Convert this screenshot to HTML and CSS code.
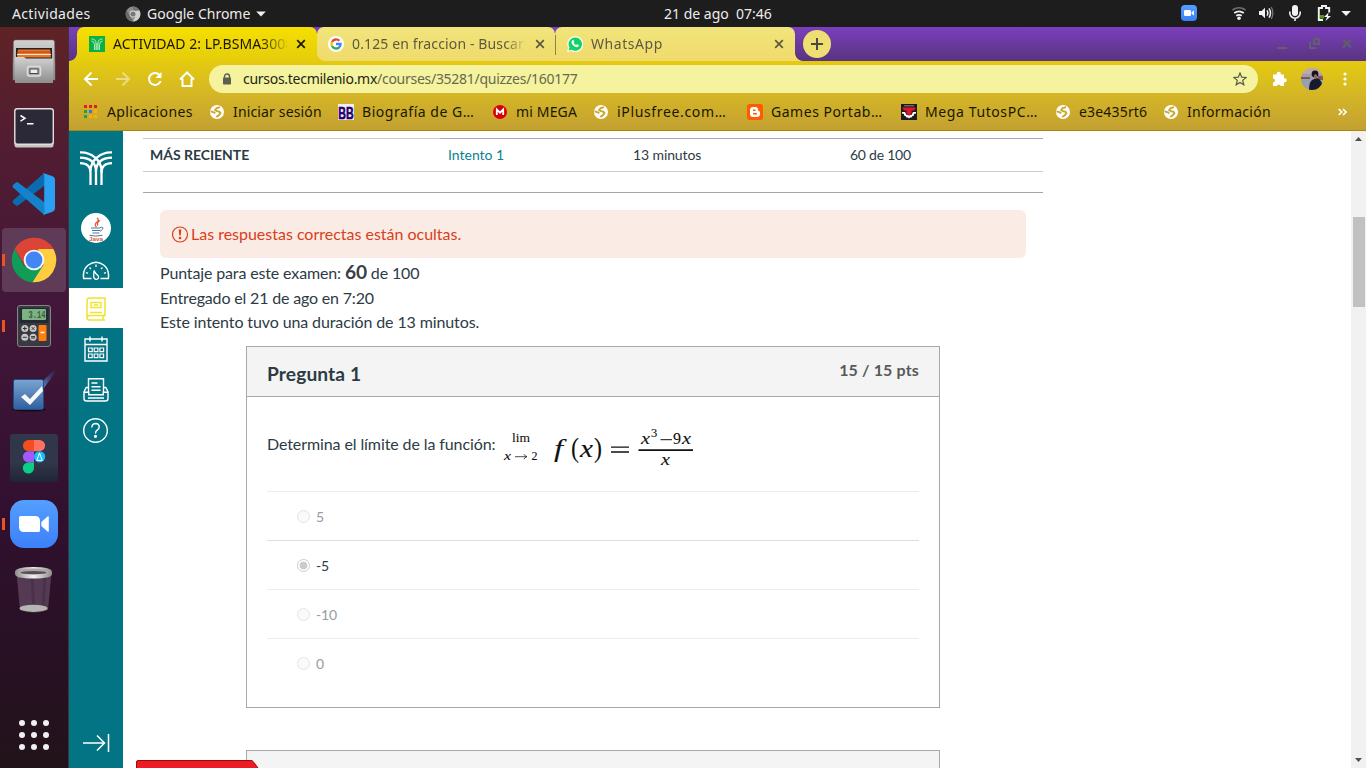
FILE: index.html
```html
<!DOCTYPE html>
<html lang="es">
<head>
<meta charset="utf-8">
<title>ACTIVIDAD 2</title>
<link rel="stylesheet" href="styles.css">
</head>
<body>
<svg width="0" height="0" class="defs">
  <defs>
    <symbol id="globe" viewBox="0 0 16 16"><circle cx="8" cy="8" r="7" fill="#fff"/><path d="M11 3.200 7.800 4 6.200 6 8 7.200l2.600.6.800 1.400-1.600 2-2.600 1.800M1.600 7.400l2.600.8 2.200.8" fill="none" stroke="#c9a72c" stroke-width="1.900"/></symbol>
    <symbol id="close" viewBox="0 0 10 10"><path d="M1.200 1.200l7.600 7.600M8.800 1.200 1.200 8.800" stroke="currentColor" stroke-width="1.700"/></symbol>
    <linearGradient id="gSteel" x1="0" y1="0" x2="0" y2="1"><stop offset="0" stop-color="#d2d2d2"/><stop offset="1" stop-color="#8d8d8d"/></linearGradient>
    <linearGradient id="gZoom" x1="0" y1="0" x2="0" y2="1"><stop offset="0" stop-color="#549fff"/><stop offset="1" stop-color="#3d80fb"/></linearGradient>
    <linearGradient id="gCheck" x1="0" y1="0" x2="0" y2="1"><stop offset="0" stop-color="#7aa5d3"/><stop offset="1" stop-color="#2f5f9f"/></linearGradient>
    <linearGradient id="gFig" x1="0" y1="0" x2="0" y2="1"><stop offset="0" stop-color="#30374a"/><stop offset=".6" stop-color="#31374a"/><stop offset="1" stop-color="#1f2536"/></linearGradient>
    <linearGradient id="gRay" x1="0" y1="1" x2="1" y2="0"><stop offset="0" stop-color="#5c8fcf"/><stop offset="1" stop-color="#2c3c70" stop-opacity=".2"/></linearGradient>
    <linearGradient id="gRim" x1="0" x2="1"><stop offset="0" stop-color="#8c8c88"/><stop offset=".5" stop-color="#f1f1ee"/><stop offset="1" stop-color="#8c8c88"/></linearGradient>
  </defs>
</svg>

<header class="topbar">
  <span class="ui activities">Actividades</span>
  <svg class="app-ico" width="16" height="16" viewBox="0 0 16 16"><circle cx="8" cy="8" r="7.400" fill="#8d8d8d"/><path d="M8 .6A7.400 7.400 0 0 1 14.600 4.500H8z" fill="#777"/><path d="M14.600 4.600A7.400 7.400 0 0 1 8 15.400L11 9.500 10.500 5z" fill="#cfcfcf"/><path d="M1.600 4.300 5 9.800l3 5.600A7.400 7.400 0 0 1 1.600 4.300z" fill="#6b6b6b"/><circle cx="8" cy="8" r="3.400" fill="#ddd"/><circle cx="8" cy="8" r="2.600" fill="#777"/></svg>
  <span class="ui appname">Google Chrome</span>
  <svg class="caret" width="10" height="6" viewBox="0 0 10 6"><path d="M.2.5h9.600L5 5.400z" fill="#f2f2f2"/></svg>
  <span class="ui clock">21 de ago&nbsp; 07:46</span>
  <svg class="tray" width="175" height="27" viewBox="0 0 175 27">
    <rect x="0" y="5" width="16" height="16" rx="4" fill="url(#gZoom)"/><rect x="3" y="10" width="7" height="6" rx="1.200" fill="#fff"/><path d="M10.600 12.200 13 10.400v5.200l-2.400-1.800z" fill="#fff"/>
    <g fill="none" stroke="#f2f2f2" stroke-width="1.700"><path d="M51.500 10q6.500-4.500 13 0" stroke="#6f6f6f"/><path d="M53.200 13q4.800-3.400 9.600 0M55.300 15.800q2.700-1.900 5.400 0"/></g><circle cx="58" cy="18.200" r="1.800" fill="#f2f2f2"/>
    <path d="M78 11h2.600L84 7.800v10.500L80.600 15H78z" fill="#f2f2f2"/><path d="M86 10.300q1.700 2.700 0 5.400M88 8.300q3 4.600 0 9.400" fill="none" stroke="#f2f2f2" stroke-width="1.500"/><path d="M90.300 7q3.200 6 0 12" fill="none" stroke="#777" stroke-width="1.300"/>
    <rect x="111" y="5" width="6" height="11" rx="3" fill="#f2f2f2"/><path d="M108.800 11.500v1.500a5.200 5.200 0 0 0 10.400 0v-1.500M114 18v3" fill="none" stroke="#f2f2f2" stroke-width="1.600"/>
    <path d="M142 20h-4.200V8H141V6h4v2h3.200v4.500" fill="none" stroke="#f2f2f2" stroke-width="1.900"/><rect x="139" y="15" width="4" height="3.500" fill="#4c9a06"/><path d="M147.500 12.500 143 17h3l-1.500 4 5.500-5h-3z" fill="#f2f2f2"/>
    <path d="M160.300 11h9.600l-4.800 5z" fill="#f2f2f2"/>
  </svg>
</header>

<div class="desktop">
  <nav class="dock">
    <div class="slot"><svg width="64" height="64" viewBox="0 0 64 64"><path d="M11.500 12q0-2 2-2h37q2 0 2 2l.5 24v14H11V36z" fill="url(#gSteel)" stroke="#777" stroke-width=".5"/><rect x="14" y="18" width="36" height="12" fill="#25211f"/><path d="M16 19.500h32l1 8H15z" fill="#e8752b"/><path d="M15 24.500h34" stroke="#fbe9d8" stroke-width="1.200"/><path d="M15 22h34" stroke="#b34012"/><path d="M13 27h9l2 1.500h27v24.500H13z" fill="url(#gSteel)"/><rect x="25.500" y="36.500" width="13" height="9.500" rx="2" fill="#aaa" stroke="#dedede" stroke-width="1.500"/><rect x="28" y="39" width="8" height="4.500" fill="#eee" stroke="#444"/></svg></div>
    <div class="slot"><svg width="64" height="64" viewBox="0 0 64 64"><rect x="12.500" y="14" width="39" height="37.500" rx="2.500" fill="#c9c5c0"/><rect x="12.800" y="12.700" width="38.500" height="35.500" rx="2.500" fill="#2b2838" stroke="#e1dfdc" stroke-width="1.400"/><path d="m18.500 19.500 4.500 2.800-4.500 2.800M25 27.800h6.500" fill="none" stroke="#fff" stroke-width="1.500"/></svg></div>
    <div class="slot"><svg width="64" height="64" viewBox="0 0 64 64"><path d="M11 38.500 42 11.200l1 12L16 43.500q-1 .7-2 0L11 41q-1-1.200 0-2.500z" fill="#0a6cb0"/><path d="M11 25.500 42 52.800l1-12L16 20.500q-1-.7-2 0L11 23q-1 1.200 0 2.500z" fill="#1583cc"/><path d="M41 11 50 14q3 1.200 3 4v28q0 2.800-3 4l-9 3q1.200-.8 1.200-3V14q0-2.200-1.200-3z" fill="#29a0f2"/></svg></div>
    <div class="slot current run"><svg width="64" height="64" viewBox="0 0 64 64"><path d="M32 32 12.800 20.800A22.300 22.300 0 0 1 51.400 21L44 22z" fill="#db4437"/><path d="M12.800 20.800A22.300 22.300 0 0 0 30.500 54.300L42 38H22z" fill="#0f9d58"/><path d="M51.400 21A22.300 22.300 0 0 1 30.500 54.300L41.500 37 36 21z" fill="#ffcd40"/><path d="M12.800 20.800 23 38l9-17h19.400A22.300 22.300 0 0 0 12.800 20.800z" fill="#db4437"/><circle cx="32" cy="32" r="10.300" fill="#f5f5f5"/><circle cx="32" cy="32" r="8.400" fill="#4285f4"/></svg></div>
    <div class="slot run"><svg width="64" height="64" viewBox="0 0 64 64"><rect x="15.500" y="11.500" width="33" height="41" rx="2.500" fill="#393942" stroke="#858585"/><rect x="17.500" y="14" width="29" height="15" fill="#232a31"/><rect x="20" y="15" width="24" height="11" rx="1" fill="#7db383"/><text x="26.500" y="24" font-size="10" class="lcd" textLength="17" lengthAdjust="spacingAndGlyphs">3.14</text><g fill="#c8c8c8"><circle cx="22.800" cy="34.500" r="3.500"/><circle cx="31.100" cy="34.500" r="3.500"/><circle cx="22.800" cy="43.300" r="3.500"/><circle cx="31.100" cy="43.300" r="3.500"/></g><path d="M20.800 34.500h4M22.800 32.500v4M29.800 33.200l2.600 2.600M32.400 33.200l-2.600 2.600M20.800 43.300h4M29.100 42.600h4M29.100 44h4" stroke="#333"/><rect x="36.500" y="31" width="8" height="16" rx="1" fill="#ff7f0e"/><path d="M38.500 38.500h4" stroke="#fff" stroke-width="1.500"/></svg></div>
    <div class="slot"><svg width="64" height="64" viewBox="0 0 64 64"><path d="M42 28 40 22 53 9v4z" fill="url(#gRay)"/><ellipse cx="27" cy="49.500" rx="17" ry="2" fill="#160b18"/><rect x="11.500" y="19.500" width="30" height="30" rx="2" fill="url(#gCheck)" stroke="#234b86"/><path d="m19 37 4-3 5 5 12-13 1 5-13 14z" fill="#f7f7f4"/></svg></div>
    <div class="slot"><svg width="64" height="64" viewBox="0 0 64 64"><rect x="8" y="8" width="48" height="48" rx="3" fill="url(#gFig)"/><path d="M32 14h-5.500a5.600 5.600 0 0 0 0 11.200H32z" fill="#f24e1e"/><path d="M32 14h5.500a5.600 5.600 0 0 1 0 11.200H32z" fill="#ff7262"/><path d="M32 25.200h-5.500a5.600 5.600 0 0 0 0 11.200H32z" fill="#a259ff"/><circle cx="37.600" cy="30.800" r="5.600" fill="#1abcfe"/><path d="M32 36.400h-5.500A5.600 5.600 0 1 0 32 42z" fill="#0acf83"/><path d="m37.500 27 1.200 3.400 1.600 4h-5.600l1.600-4z" fill="none" stroke="#fff"/></svg></div>
    <div class="slot run"><svg width="64" height="64" viewBox="0 0 64 64"><rect x="8" y="8" width="48" height="48" rx="14" fill="url(#gZoom)"/><path d="M17 25.500q0-1.500 1.500-1.500H33q5 0 5 5v9.500q0 1.500-1.500 1.500H22q-5 0-5-5zM39.300 30l6-5.300q1.500-1.200 1.500.3v14q0 1.500-1.500.3l-6-5.300z" fill="#fff"/></svg></div>
    <div class="slot"><svg width="64" height="64" viewBox="0 0 64 64"><path d="m14.500 15 3.500 37q14 5 28 0l3.500-37z" fill="#6a5268" opacity=".65"/><path d="m30 18 2 35M43 18l-2 34" stroke="#3b2640" stroke-width="3" opacity=".4"/><ellipse cx="31.500" cy="50.300" rx="14" ry="3.600" fill="#b5b5b1"/><path d="M13 14q0-5 18.500-5T50 14v2q0 4.500-18.500 4.500T13 16z" fill="url(#gRim)"/><ellipse cx="31.500" cy="13.500" rx="15.500" ry="3" fill="#aaa8a4"/><ellipse cx="31.500" cy="14.600" rx="13" ry="1.700" fill="#5c4b5c"/></svg></div>
    <svg class="grid" width="32" height="32" viewBox="0 0 32 32" fill="#f0f0f0"><circle cx="4" cy="4" r="3"/><circle cx="16" cy="4" r="3"/><circle cx="28" cy="4" r="3"/><circle cx="4" cy="16" r="3"/><circle cx="16" cy="16" r="3"/><circle cx="28" cy="16" r="3"/><circle cx="4" cy="28" r="3"/><circle cx="16" cy="28" r="3"/><circle cx="28" cy="28" r="3"/></svg>
  </nav>

  <div class="browser">
    <div class="chrome">
      <div class="tabs">
        <div class="edge"></div>
        <div class="tab active">
          <svg width="16" height="16" viewBox="0 0 16 16"><path fill="#08b243" d="M0 0h16v16H0z"/><path d="M2.500 3q4.500 0 4.500 4v7M2.500 5q3 0 3 4v5M13.500 3Q9 3 9 7v7M13.500 5q-3 0-3 4v5M8 7v7" fill="none" stroke="#d9f5e0" stroke-width=".8"/></svg>
          <span class="ui title t1">ACTIVIDAD 2: LP.BSMA3008</span><svg class="x" width="10" height="10"><use href="#close"/></svg>
        </div>
        <div class="tab other second">
          <svg width="16" height="16" viewBox="0 0 16 16"><circle cx="8" cy="8" r="8" fill="#fff"/><g fill="none" stroke-width="2.300"><path d="M4 6A4.600 4.600 0 0 1 11.400 4.800" stroke="#ea4335"/><path d="M4 6a4.600 4.600 0 0 0 0 4" stroke="#fbbc05"/><path d="M4 10a4.600 4.600 0 0 0 7 1.500" stroke="#34a853"/><path d="M11 11.600A4.600 4.600 0 0 0 12.600 8H8" stroke="#4285f4"/></g></svg>
          <span class="ui title t2">0.125 en fraccion - Buscar con</span><svg class="x" width="10" height="10"><use href="#close"/></svg>
        </div>
        <div class="tab other third">
          <svg width="16" height="16" viewBox="0 0 16 16"><path d="M0 16 1.200 11.800A8 8 0 1 1 4.200 15z" fill="#fff"/><path d="M1.500 14.500 2.500 11.500A6.700 6.700 0 1 1 4.600 13.700z" fill="#12d366"/><path d="M5.300 4.300q1-.8 1.500.2l.5 1.300-.7 1q.8 1.700 2.500 2.300l.9-.9 1.700.8q.5 1.700-1.700 2.200-2.500 0-4.400-2.500-2-2.600-.3-4.400z" fill="#fff"/></svg>
          <span class="ui title t3">WhatsApp</span><svg class="x" width="10" height="10"><use href="#close"/></svg>
        </div>
        <div class="edge right"></div>
        <div class="plus"><svg width="12" height="12" viewBox="0 0 12 12"><path d="M6 0v12M0 6h12" stroke="#474a42" stroke-width="2"/></svg></div>
        <svg class="winbtns" width="76" height="12" viewBox="0 0 76 12" fill="none" stroke="#606167" stroke-width="2"><path d="M0 10h10M37 1h5v5h-5zM33 4v6h6M66 1.500l8 8M74 1.500l-8 8"/></svg>
      </div>
      <div class="toolbar">
        <svg class="navico" width="112" height="18" viewBox="0 0 112 18" fill="none" stroke="#fff" stroke-width="2"><path d="M15 9H2M8.500 2.500 2 9l6.500 6.500"/><path d="M33 9h13M39.500 2.500 46 9l-6.500 6.500" opacity=".45"/><path d="M77 5.500A6 6 0 1 0 77.700 11"/><path d="M78.500 2v6h-6z" fill="#fff" stroke="none"/><path d="M97 9.500 104 2.500l7 7M99.500 8.500v7.500h9V8.500"/></svg>
        <div class="omnibox">
          <svg width="10" height="12" viewBox="0 0 10 12"><path d="M2.500 5V3.500a2.500 2.500 0 0 1 5 0V5" fill="none" stroke="#5d6050" stroke-width="1.400"/><rect x="1" y="4.500" width="8" height="7" rx=".7" fill="#5d6050"/></svg>
          <span class="ui url"><b>cursos.tecmilenio.mx</b>/courses/35281/quizzes/160177</span>
          <svg class="star" width="14" height="14" viewBox="0 0 14 14"><path d="M7 1 8.700 5.200l4.500.3-3.500 2.900 1.100 4.400L7 10.400l-3.800 2.400 1.100-4.400L.8 5.500l4.500-.3z" fill="none" stroke="#55584a" stroke-width="1.200"/></svg>
        </div>
        <svg class="ext" width="16" height="16" viewBox="0 0 16 16"><path d="M1 3.500h3.800a2.100 2.100 0 1 1 4 0H12v3.800a2.100 2.100 0 1 1 0 4V15H8.700a2 2 0 0 0-3.900 0H1v-3.600a2 2 0 0 0 0-4z" fill="#fff"/></svg>
        <svg class="me" width="22" height="22" viewBox="0 0 22 22"><clipPath id="mc"><circle cx="11" cy="11" r="11"/></clipPath><g clip-path="url(#mc)"><path fill="#98a0ad" d="M0 0h22v22H0z"/><path fill="#bfaaa8" d="M0 0h22v6H0z"/><path fill="#8d5350" d="M0 9h9v2H0zM17 8h5v4h-5z"/><path d="M8 22q0-9 4-10.500L16 10q5 1 6 12z" fill="#151a2e"/><circle cx="14" cy="6" r="3.400" fill="#16131a"/><ellipse cx="14.500" cy="8.500" rx="1.700" ry="2.200" fill="#9a6552"/></g></svg>
        <svg class="dots" width="4" height="14" viewBox="0 0 4 14" fill="#fff"><circle cx="2" cy="2" r="1.600"/><circle cx="2" cy="7" r="1.600"/><circle cx="2" cy="12" r="1.600"/></svg>
      </div>
      <div class="bookmarks">
        <a class="bm b1"><svg width="16" height="16" viewBox="0 0 16 16"><path fill="#e41f1a" d="M1 1h3v3H1zM6 1h3v3H6zM11 1h3v3h-3z"/><path fill="#16a35a" d="M1 6h3v3H1zM1 11h3v3H1z"/><path fill="#3c6cf0" d="M6 6h3v3H6z"/><path fill="#f6b500" d="M11 6h3v3h-3zM6 11h3v3H6zM11 11h3v3h-3z"/></svg><span class="ui">Aplicaciones</span></a>
        <a class="bm b2"><svg width="16" height="16"><use href="#globe"/></svg><span class="ui">Iniciar sesión</span></a>
        <a class="bm b3"><svg width="16" height="16" viewBox="0 0 16 16"><path fill="#f0eef5" d="M0 0h16v16H0z"/><text x=".3" y="14.600" class="bb" textLength="15.400" lengthAdjust="spacingAndGlyphs">BB</text></svg><span class="ui">Biografía de G…</span></a>
        <a class="bm b4"><svg width="16" height="16" viewBox="0 0 16 16"><circle cx="8" cy="8" r="7" fill="#d90007"/><path d="M4.800 11V5.500L8 8.700l3.200-3.200V11" fill="none" stroke="#fff" stroke-width="1.800"/></svg><span class="ui">mi MEGA</span></a>
        <a class="bm b5"><svg width="16" height="16"><use href="#globe"/></svg><span class="ui">iPlusfree.com…</span></a>
        <a class="bm b6"><svg width="16" height="16" viewBox="0 0 16 16"><rect width="16" height="16" rx="2.500" fill="#ff5b00"/><path d="M6 3h2.500q2.500 0 2.500 2.500 0 1.300 1 1.500 1 .2 1 1.500v1.500q0 3-3 3H6q-3 0-3-3V6q0-3 3-3z" fill="#fff"/><path d="M6 6.300h2.500M6 9.800h4" stroke="#ff5b00" stroke-width="1.500"/></svg><span class="ui">Games Portab…</span></a>
        <a class="bm b7"><svg width="16" height="16" viewBox="0 0 16 16"><path fill="#1c1c1c" d="M0 0h16v16H0z"/><path d="M3 1.800h10" stroke="#aaa" stroke-width=".8"/><path d="M1 8h3l1.500 3h5L12 8h3v1.500l-2 .5v1.500l-1.500.5-1 1.500H9L8 14.500 7 13.500H5.500l-1-1.500-1.500-.5V10l-2-.5z" fill="#fff"/><path d="M1 3.500h14L13 6.500h-2.500V9.500L8 12 5.500 9.500V6.500H3z" fill="#e6142a"/></svg><span class="ui">Mega TutosPC…</span></a>
        <a class="bm b8"><svg width="16" height="16"><use href="#globe"/></svg><span class="ui">e3e435rt6</span></a>
        <a class="bm b9"><svg width="16" height="16"><use href="#globe"/></svg><span class="ui">Información</span></a>
        <svg class="more" width="9" height="8" viewBox="0 0 9 8"><path d="m.7 1 3 3-3 3M5 1l3 3-3 3" fill="none" stroke="#fff" stroke-width="1.700"/></svg>
      </div>
    </div>

    <div class="page">
      <nav class="side">
        <div class="n logo"><svg width="34" height="36" viewBox="0 0 34 36" fill="none" stroke="#fff" stroke-width="2.300"><path d="M1 2.300Q10 2 16 7.500 22.500 13 22.500 21v14M1 7.700Q17 8 17 22v13M1 13.200q10.500 0 10.500 9.500V35"/><path d="M33 2.300Q24 2 18 7.500 11.500 13 11.500 21M33 7.700Q17 8 17 22M33 13.200q-10.500 0-10.500 9.500"/></svg></div>
        <div class="n ava"><svg width="30" height="30" viewBox="0 0 30 30"><circle cx="15" cy="15" r="15" fill="#fff"/><path d="M16 5q3 2-.5 4.500-2.500 2 0 4.500M19 7.500q-4 2.500-2 5" fill="none" stroke="#e2573a" stroke-width="1.300"/><path d="M10 15h9M11 17.500h8M11.500 20h7M8.500 22.300q6 1.500 13 0M19 14.500q4-1 2.500 1.800L19 18.500" fill="none" stroke="#4d779a"/><text x="8" y="28" class="java" textLength="14" lengthAdjust="spacingAndGlyphs">Java</text></svg></div>
        <div class="n dash"><svg width="28" height="20" viewBox="0 0 28 20" fill="none" stroke="#fff" stroke-width="1.500"><path d="M9.500 17.500H1.700q-1.500-8.500 4.600-13.500 7.700-5.500 15.400 0Q27.800 9 26.300 17.500H18.500"/><path d="M12 9.500q1.500 3.500 4.300 5.500 1 3-2 3.300-2.700-.2-2.600-3.300zM4 11.500l2 .8M7.500 6.500 9 8M14 3.500V6M20.500 6.500 19 8M24 11.500l-2 .8" stroke-width="1.300"/></svg></div>
        <div class="n on"><svg width="20" height="24" viewBox="0 0 20 24" fill="none" stroke="#efe32c" stroke-width="1.500"><path d="M17.500 18.500H3.500q-2.500 0-2.500 2.300T3.500 23H19M1 20.500V4q0-3 3-3h15v17.500h-2V23"/><path d="M5 5.500h10v5H5zM7.500 8h5M4 15.500h12" stroke-width="1.400"/></svg></div>
        <div class="n"><svg width="24" height="26" viewBox="0 0 24 26" fill="none" stroke="#fff" stroke-width="1.400"><path d="M1 3h22v22H1zM1 8.500h22M6 .5v5M18 .5v5"/><path d="M4.500 12h3.700v3.700H4.500zM10.200 12h3.700v3.700h-3.700zM15.900 12h3.700v3.700h-3.700zM4.500 18h3.700v3.700H4.500zM10.200 18h3.700v3.700h-3.700zM15.900 18h3.700v3.700h-3.700z" stroke-width="1.200"/></svg></div>
        <div class="n"><svg width="26" height="24" viewBox="0 0 26 24" fill="none" stroke="#fff" stroke-width="1.400"><path d="M5.500 14.500V.8h15v13.700M5.500 9.500H3.200L1 14v6.500Q1 23 3.500 23h19q2.500 0 2.500-2.500V14l-2.200-4.500h-2.300M1.200 14.200h4.500v2.500h14.600v-2.500h4.500M8.500 5h6M8.500 8.700h9M8.500 12.200h9M5 20h16"/></svg></div>
        <div class="n help"><svg width="26" height="26" viewBox="0 0 26 26" fill="none" stroke="#fff" stroke-width="1.400"><circle cx="12.500" cy="12.500" r="11.800"/><path d="M8.800 9.500q.2-4 3.900-4 3.500.2 3.500 3.500 0 1.800-2 3.200-1.700 1-1.700 3.300"/><circle cx="12.500" cy="18.300" r=".9" fill="#fff"/></svg></div>
        <svg class="expand" width="27" height="18" viewBox="0 0 27 18" fill="none" stroke="#fff" stroke-width="1.500"><path d="M0 9h21.500M14 1.500 21.500 9 14 16.500M25.500 0v18"/></svg>
      </nav>
      <main>
        <div class="thead"><span>Puntaje</span></div>
        <div class="row"><strong>MÁS RECIENTE</strong><a>Intento 1</a><span>13 minutos</span><span>60 de 100</span></div>
        <div class="rule"></div>
        <section class="quiz">
          <div class="alert"><svg width="17" height="17" viewBox="0 0 17 17"><circle cx="8" cy="8.500" r="7.500" fill="none" stroke="#d8401a" stroke-width="1.200"/><path d="M6.700 3.600h2.600l-.6 6H7.300z" fill="#d8401a"/><circle cx="8" cy="12" r="1.300" fill="#d8401a"/></svg><span>Las respuestas correctas están ocultas.</span></div>
          <p class="score">Puntaje para este examen: <b>60</b> de 100</p>
          <p class="sent">Entregado el 21 de ago en 7:20</p>
          <p>Este intento tuvo una duración de 13 minutos.</p>
        </section>
        <article class="question">
          <header><h2>Pregunta 1</h2><span class="pts">15 / 15 pts</span></header>
          <div class="qtext"><span>Determina el límite de la función:</span>
            <svg class="math" width="200" height="50" viewBox="500 420 200 50">
              <text x="512" y="442" font-size="13" textLength="18" lengthAdjust="spacingAndGlyphs">lim</text>
              <text x="504" y="460" font-size="13" class="i" textLength="7" lengthAdjust="spacingAndGlyphs">x</text>
              <path d="M515 456.700h11.500M524 454.200q.8 2 3 2.500-2.200.5-3 2.500" fill="none" stroke="#222" stroke-width=".8"/>
              <text x="531.500" y="460" font-size="12">2</text>
              <text x="554" y="457" font-size="25" class="i" textLength="9" lengthAdjust="spacingAndGlyphs">f</text>
              <text x="571" y="457" font-size="27" textLength="8" lengthAdjust="spacingAndGlyphs">(</text>
              <text x="580" y="457" font-size="25" class="i" textLength="13" lengthAdjust="spacingAndGlyphs">x</text>
              <text x="594" y="457" font-size="27" textLength="8" lengthAdjust="spacingAndGlyphs">)</text>
              <path d="M611 447.200h18M611 452h18" stroke="#111" stroke-width="1.300"/>
              <text x="641" y="444" font-size="17" class="i" textLength="9" lengthAdjust="spacingAndGlyphs">x</text>
              <text x="651" y="437" font-size="12.500">3</text>
              <path d="M660.500 439.700h11.500" stroke="#111"/>
              <text x="673" y="444" font-size="16">9</text>
              <text x="682" y="444" font-size="17" class="i" textLength="9" lengthAdjust="spacingAndGlyphs">x</text>
              <path d="M638.500 450.200h54.500" stroke="#111" stroke-width="1.800"/>
              <text x="661" y="465" font-size="17" class="i" textLength="9" lengthAdjust="spacingAndGlyphs">x</text>
            </svg>
          </div>
          <div class="ans"><i class="radio"></i><span>5</span></div>
          <div class="ans sel"><i class="radio"></i><span>-5</span></div>
          <div class="ans"><i class="radio"></i><span>-10</span></div>
          <div class="ans"><i class="radio"></i><span>0</span></div>
        </article>
        <article class="question next"><header><h2>Pregunta 2</h2><span class="pts">15 / 15 pts</span></header></article>
        <svg class="redtab" width="124" height="8" viewBox="0 0 124 8"><path d="M.5 8V2Q.5.500 2 .5H115q1.500 0 2.300 1.200L122 8" fill="#ec1b24" stroke="#9d090d"/></svg>
      </main>
      <div class="scroll">
        <svg width="15" height="17" viewBox="0 0 15 17"><path d="M4 10h7L7.500 6z" fill="#505050"/></svg>
        <div class="thumb"></div>
        <svg class="down" width="15" height="17" viewBox="0 0 15 17"><path d="M4 7h7l-3.500 4z" fill="#505050"/></svg>
      </div>
    </div>
  </div>
</div>
</body>
</html>
```
FILE: styles.css
```css
* { box-sizing: border-box; }
body { margin: 0; width: 1366px; height: 768px; overflow: hidden; font-family: Lato, sans-serif; background: #fff; }
svg { display: block; flex: none; }
.defs { position: absolute; }
.ui { font-family: "Noto Sans", "Open Sans", sans-serif; font-size: 14px; white-space: nowrap; }

.topbar { height: 27px; background: #1d1d1d; color: #ececec; display: flex; align-items: center; }
.topbar .ui { padding-bottom: 1px; }
.activities { padding-left: 12px; width: 125px; letter-spacing: .35px; }
.app-ico { width: 16px; }
.appname { padding-left: 6px; width: 115px; }
.caret { margin-left: 0; }
.clock { margin-left: 398px; width: 110px; }
.tray { margin-left: auto; margin-right: 10px; }

.desktop { display: flex; height: 741px; }
.dock { width: 69px; border-right: 1px solid #3f3339; padding: 3px 0 0 2px; display: flex; flex-direction: column; gap: 2px; background: linear-gradient(#5e2325, #521d31 15%, #431739 36%, #31102f 66%, #261122 88%, #22131a); }
.slot { width: 64px; height: 64px; border-radius: 4px; flex: none; position: relative; }
.current { background: #5f3b58; }
.run::before { content: ""; position: absolute; left: 0; top: 26px; width: 3px; height: 12px; background: #e95420; }
.grid { margin: auto 0 17px 16px; }
.lcd { font-family: "Liberation Mono", monospace; font-weight: 700; fill: #3c5a45; }

.browser { width: 1297px; display: flex; flex-direction: column; }
.chrome { height: 104px; flex: none; background: linear-gradient(#f5df00, #e4ca10 34%, #d5b725 64%, #c3a032); border-bottom: 1px solid #a68d00; }
.tabs { height: 34px; display: flex; background: linear-gradient(#7b3fbd, #58347f) no-repeat; }
.edge { width: 8px; background: radial-gradient(circle at 0 0, transparent 7.5px, #e6cd0c 8.2px) bottom / 8px 8px no-repeat; }
.tab { height: 34px; display: flex; align-items: center; padding-left: 12px; }
.active { width: 240px; background: linear-gradient(#f5df00, #e6cd0c); border-radius: 7px 7px 0 0; color: #181800; }
.other { background: linear-gradient(#f1e57b, #f0da6c); color: #5c5a40; }
.second { width: 238px; border-radius: 7px 7px 0 0; padding-left: 11px; background: radial-gradient(circle at 8px 0, transparent 7.5px, #e6cd0c 8.2px) left bottom / 8px 8px no-repeat, linear-gradient(#f1e57b, #f0da6c); }
.third { width: 240px; border-radius: 7px 7px 0 0; position: relative; }
.third::before { content: ""; position: absolute; left: 0; top: 8px; width: 1px; height: 20px; background: #91824c; }
.title { margin-left: 8px; width: 174px; padding-bottom: 1px; overflow: hidden; -webkit-mask-image: linear-gradient(90deg, #000 88%, transparent); }
.t1 { -webkit-mask-image: linear-gradient(90deg, #000 84%, transparent 102%); letter-spacing: .03px; }
.t2 { letter-spacing: .13px; }
.t3 { letter-spacing: .55px; }
.x { margin-left: 9px; }
.edge.right { height: 34px; background-image: radial-gradient(circle at 100% 0, transparent 7.5px, #f0da6c 8.2px); }
.plus { width: 28px; height: 28px; border-radius: 50%; background: #efdf73; display: grid; place-items: center; margin-top: 3px; }
.winbtns { margin: 11px 13px 0 auto; }

.toolbar { height: 36px; display: flex; align-items: center; padding-left: 14px; }
.omnibox { margin-left: 14px; width: 1049px; height: 28px; border-radius: 14px; background: #f5f39d; display: flex; align-items: center; padding: 0 11px 0 13px; color: #67694f; }
.url { margin-left: 11px; letter-spacing: -.28px; padding-bottom: 1px; }
.url b { font-weight: 400; color: #242715; }
.star { margin-left: auto; }
.ext { margin-left: 14px; }
.me { margin-left: 13px; }
.dots { margin-left: 20px; }

.bookmarks { height: 33px; display: flex; align-items: center; padding: 0 19px 4px 14px; }
.bm { display: flex; gap: 8px; align-items: center; color: #1a1700; flex: none; }
.b1 { width: 126px; letter-spacing: .36px; } .b2 { width: 129px; letter-spacing: .15px; }
.b3, .b5, .b6, .b7 { width: 154px; letter-spacing: .53px; }
.b4 { width: 101px; letter-spacing: .15px; } .b5 { letter-spacing: .65px; } .b7 { letter-spacing: .6px; }
.b8 { width: 108px; letter-spacing: .18px; } .b9 { letter-spacing: .27px; }
.bb { font: 700 17px "Liberation Sans", sans-serif; fill: #24006b; stroke: #24006b; stroke-width: .6px; letter-spacing: 0; }
.more { margin-left: auto; }

.page { height: 637px; display: flex; }
.side { width: 54px; background: #037483; display: flex; flex-direction: column; align-items: center; }
.n { width: 54px; display: grid; place-items: center; flex: none; height: 41px; }
.logo { height: 74px; } .ava { height: 46px; } .dash { height: 37px; padding-top: 3px; } .on { height: 40px; background: #fff; padding-top: 2px; }
.help { height: 41px; }
.java { font: 700 6px "Liberation Sans", sans-serif; fill: #e2573a; }
.expand { margin-top: auto; margin-bottom: 16px; }

main { width: 1228px; overflow: hidden; position: relative; color: #2d3b45; font-size: 16px; letter-spacing: -.11px; }
.thead { margin-left: 20px; width: 900px; height: 8px; overflow: hidden; border-bottom: 1px solid #a5afbb; border-image: linear-gradient(90deg, #c7cdd1 297px, #a5aab8 297px) 1; font-weight: 700; font-size: 14px; line-height: 20px; display: flex; align-items: flex-end; }
.thead span { margin-left: 718px; margin-bottom: 4px; }
.row { margin-left: 20px; width: 900px; height: 33px; padding: 0 0 2px 7px; border-bottom: 1px solid #c7cdd1; display: grid; grid-template-columns: 298px 185px 217px 1fr; align-items: center; font-size: 14px; }
.row strong { letter-spacing: -.03px; }
.row a { color: #0e7f93; letter-spacing: 0; }
.row span:last-child { letter-spacing: -.25px; }
.rule { margin-left: 20px; width: 900px; height: 21px; border-bottom: 1px solid #a2a5a8; }
.quiz { margin: 17px 0 0 37px; width: 866px; }
.alert { height: 48px; border-radius: 6px; background: #fbebe5; color: #d8401a; display: flex; align-items: center; padding-left: 12px; gap: 2px; margin-bottom: 3px; letter-spacing: -.01px; }
.alert span { padding-bottom: 2px; }
p { margin: 0; height: 24.5px; line-height: 24.5px; white-space: nowrap; }
.score { line-height: 22px; letter-spacing: -.14px; }
.sent { letter-spacing: -.17px; }
p b { font-size: 19.2px; color: #373f46; }
.question { margin-left: 123px; width: 694px; height: 362px; border: 1px solid #a8a8a8; margin-top: 11.5px; }
.question header { height: 50px; background: #f4f4f4; border-bottom: 1px solid #a8a8a8; display: flex; justify-content: space-between; padding: 0 20px; }
h2 { margin: 4px 0 0; font-size: 19.2px; line-height: 46px; letter-spacing: .1px; }
.pts { font-weight: 700; color: #595959; line-height: 45px; letter-spacing: .15px; }
.qtext { height: 94px; display: flex; padding: 23px 0 0 20px; line-height: 48px; letter-spacing: -.1px; }
.qtext > span { width: 229px; white-space: nowrap; }
.math { margin-left: 4px; font-family: "Liberation Serif", serif; fill: #111; letter-spacing: 0; }
.math text { stroke: #111; stroke-width: .1px; }
.i { font-style: italic; }
.ans { height: 49px; margin: 0 20px; border-top: 1px solid #ececec; padding-left: 30px; display: flex; align-items: center; gap: 6px; font-size: 14px; color: #969da2; }
.sel { border-top-color: #ddd; color: #2d3b45; }
.radio { width: 13px; height: 13px; border: 1px solid #e4e4e4; border-radius: 50%; background: #fafafa; }
.sel .radio { border-color: #cbcbcb; background: radial-gradient(circle, #cbcbcb 3.7px, #fff 4.2px); }
.next { margin-top: 42px; }
.redtab { position: absolute; left: 13px; bottom: 0; }
.scroll { width: 15px; background: #f1f1f1; display: flex; flex-direction: column; }
.thumb { margin: 69px 1px 0 2px; height: 90px; background: #c1c1c1; }
.down { margin-top: auto; }
```
